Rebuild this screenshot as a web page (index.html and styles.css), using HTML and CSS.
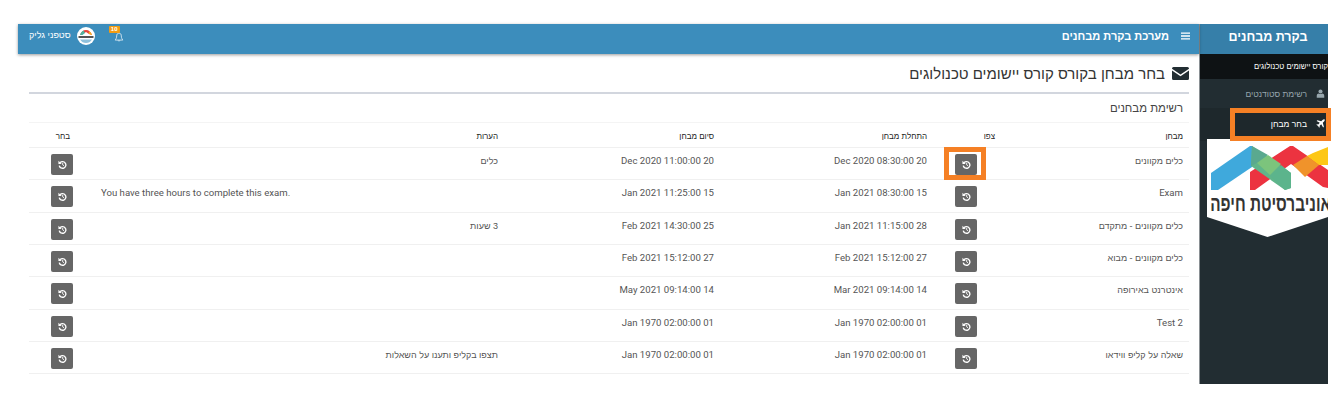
FILE: index.html
```html
<!DOCTYPE html>
<html lang="he" dir="rtl">
<head>
<meta charset="utf-8">
<title>בקרת מבחנים</title>
<link rel="stylesheet" href="styles.css">
</head>
<body>
<div class="app">
  <aside class="sidebar">
    <div class="brand">בקרת מבחנים</div>
    <div class="course">קורס יישומים טכנולוגים</div>
    <nav class="menu">
      <a class="menu-item">
        <svg class="menu-icon" viewBox="0 0 12 12"><circle cx="6" cy="3.2" r="2.7" fill="currentColor"/><path d="M1 11.500V9c0-2 1.500-3 2.800-3 .7.500 1.400.8 2.200.8s1.500-.3 2.200-.8C9.500 6 11 7 11 9v2.500z" fill="currentColor"/></svg>
        <span>רשימת סטודנטים</span>
      </a>
      <a class="menu-item active">
        <svg class="menu-icon" viewBox="0 0 12 12"><path d="M11.500.5c-.8-.5-2 0-2.800.8L7 3 1.800 1.500.8 2.500 5 5 3 7.200 1.300 7 .5 7.800l2.300 1.400L4.200 11.500l.8-.8-.2-1.700L7 7l2.500 4.200 1-1L9 5l1.700-1.700c.8-.8 1.300-2 .8-2.800z" fill="currentColor"/></svg>
        <span>בחר מבחן</span>
      </a>
    </nav>
    <div class="logo">
      <svg class="logo-mark" viewBox="0 0 121 44">
        <path d="M4 27 43 0h2v21L11 44H4z" fill="#3fa9dc"/>
        <path d="M43 26 83 0h3l35 24v18l-5-1L84 18 48 44h-5z" fill="#ec3340"/>
        <path d="M45 0l39 27v15l-6 2L44 20z" fill="#60b58a"/>
        <path d="M45 0l16 9-11 8-6 3z" fill="#5aa98f"/>
        <path d="M50 17l11-8 13 9-11 11z" fill="#7cc47c"/>
        <path d="M74 19l10 8v15l-6 2-15-14z" fill="#5cb48c"/>
        <path d="M86 19l14-9 12 9-14 12z" fill="#f0932b"/>
        <path d="M100 10l6-3 15-6v18h-9z" fill="#fdc715"/>
      </svg>
      <div class="logo-text">אוניברסיטת חיפה</div>
    </div>
  </aside>

  <div class="main">
    <header class="topbar">
      <div class="topbar-title">
        <svg class="hamburger" viewBox="0 0 10 8"><path d="M0 0h10v1.400H0zM0 3.300h10v1.400H0zM0 6.600h10V8H0z" fill="currentColor"/></svg>
        <span>מערכת בקרת מבחנים</span>
      </div>
      <div class="topbar-tools">
        <div class="bell">
          <svg viewBox="0 0 12 13" class="bell-icon"><path d="M6 1.500c-2 0-3 1.500-3 3.500 0 3-1 4-2 5.500h10c-1-1.500-2-2.500-2-5.500 0-2-1-3.500-3-3.500zM4.800 11a1.300 1.300 0 0 0 2.400 0" fill="none" stroke="currentColor" stroke-width=".9"/></svg>
          <span class="badge">10</span>
        </div>
        <svg class="avatar" viewBox="0 0 18 18"><circle cx="9" cy="9" r="9" fill="#fff"/><path d="M3 8c1-3 3-5 6-5s5 2 6 5l-3-1-3-2-3 2z" fill="#e8453c"/><path d="M3 8c.5-2 2-4 3.500-4.500L8 6 5.500 8z" fill="#4fb3a0"/><path d="M12.500 4.500c1.200.8 2 2 2.500 3.500l-2-.5-1.500-1.500z" fill="#f5b21a"/><rect x="1.500" y="9" width="15" height="2" fill="#555"/><path d="M3 12.500h12c-1.500 2.500-3.500 3.500-6 3.500s-4.500-1-6-3.500z" fill="#8fc1dc"/></svg>
        <span class="user-name">סטפני גליק</span>
      </div>
    </header>

    <section class="content">
      <h1 class="page-title">
        <svg class="envelope" viewBox="0 0 17 13"><path d="M1.500 0h14A1.500 1.500 0 0 1 17 1.500v.3L8.500 7.500 0 1.800v-.3A1.500 1.500 0 0 1 1.500 0z" fill="#222d32"/><path d="M0 3.500l8.500 5.700L17 3.500v8A1.500 1.500 0 0 1 15.500 13h-14A1.500 1.500 0 0 1 0 11.500z" fill="#222d32"/></svg>
        <span>בחר מבחן בקורס קורס יישומים טכנולוגים</span>
      </h1>
      <div class="box">
        <h2 class="box-title">רשימת מבחנים</h2>
        <table class="exams">
          <colgroup>
            <col class="c-name"><col class="c-view"><col class="c-start"><col class="c-end"><col class="c-note"><col class="c-pick">
          </colgroup>
          <thead>
            <tr><th>מבחן</th><th>צפו</th><th>התחלת מבחן</th><th>סיום מבחן</th><th>הערות</th><th>בחר</th></tr>
          </thead>
          <tbody id="rows"></tbody>
        </table>
      </div>
      <div class="marker marker-btn"></div>
    </section>
  </div>
  <div class="marker marker-menu"></div>
</div>
<template id="btn"><span class="hist"><svg viewBox="0 0 10 10"><path d="M2.300 3A3.700 3.700 0 1 1 1.400 6.200" fill="none" stroke="#fff" stroke-width="1.500"/><path d="M.5.8v3.600h3.600z" fill="#fff"/><path d="M5.200 3.200v2.200l1.500 1" fill="none" stroke="#fff" stroke-width="1"/></svg></span></template>
<script src="app.js"></script>
</body>
</html>
```

FILE: app.js
```js
var data = [
  ["כלים מקוונים", "20 Dec 2020 08:30:00", "20 Dec 2020 11:00:00", "כלים"],
  ["Exam", "15 Jan 2021 08:30:00", "15 Jan 2021 11:25:00", "You have three hours to complete this exam."],
  ["כלים מקוונים - מתקדם", "28 Jan 2021 11:15:00", "25 Feb 2021 14:30:00", "3 שעות"],
  ["כלים מקוונים - מבוא", "27 Feb 2021 15:12:00", "27 Feb 2021 15:12:00", ""],
  ["אינטרנט באירופה", "14 Mar 2021 09:14:00", "14 May 2021 09:14:00", ""],
  ["Test 2", "01 Jan 1970 02:00:00", "01 Jan 1970 02:00:00", ""],
  ["שאלה על קליפ ווידאו", "01 Jan 1970 02:00:00", "01 Jan 1970 02:00:00", "תצפו בקליפ ותענו על השאלות"]
];
var btn = document.getElementById("btn").innerHTML;
function cell(text) {
  if (/[\u0590-\u05FF]/.test(text)) return "<td class='he'>" + text + "</td>";
  if (/^[A-Za-z]{3,} [a-z]/.test(text)) return "<td class='note-ltr' dir='ltr'>" + text + "</td>";
  return "<td>" + text + "</td>";
}
document.getElementById("rows").innerHTML = data.map(function (r) {
  return "<tr>" + cell(r[0]) + "<td class='cell-view'>" + btn + "</td>" + cell(r[1]) + cell(r[2]) + cell(r[3]) +
    "<td class='cell-pick'>" + btn + "</td></tr>";
}).join("");
```

FILE: styles.css
```css
* { box-sizing: border-box; }
html, body { margin: 0; padding: 0; background: #fff; }
body {
  font-family: Roboto, "Liberation Sans", sans-serif;
  color: #555;
  height: 406px;
  overflow: hidden;
  padding: 24px 16px 0 18px;
}
.app {
  position: relative;
  display: flex;
  width: 1310px;
  height: 360px;
}

/* sidebar */
.sidebar {
  flex: 0 0 129px;
  background: #222d32;
  border-left: 1px solid #8a9094;
  display: flex;
  flex-direction: column;
}
.brand {
  height: 30px;
  background: #367fa9;
  color: #fff;
  font-family: "Liberation Sans", sans-serif;
  font-weight: 700;
  font-size: 12.500px;
  line-height: 26px;
  text-align: center;
  padding-left: 8px;
}
.course {
  height: 25px;
  background: #0e1214;
  color: #fff;
  font-family: "Liberation Sans", sans-serif;
  font-size: 7.700px;
  line-height: 25px;
  white-space: nowrap;
  overflow: hidden;
}
.menu { display: flex; flex-direction: column; }
.menu-item {
  display: flex;
  align-items: center;
  height: 29px;
  padding-right: 3px;
  gap: 9px;
  color: #97a6ad;
  font-family: "Liberation Sans", sans-serif;
  font-size: 8.500px;
}
.menu-item.active {
  height: 33px;
  padding-bottom: 2px;
  color: #fff;
  background: #1e282c;
}
.menu-icon { width: 9px; height: 9px; }
.logo {
  margin-top: -2px;
  width: 121px;
  height: 98px;
  align-self: flex-start;
  background: #fff;
  overflow: hidden;
  clip-path: polygon(0 0, 100% 0, 100% 79.500%, 50% 100%, 0 79.500%);
}
.logo-mark { display: block; width: 121px; height: 44px; margin-top: 7px; }
.logo-text {
  margin-top: 1px;
  color: #333;
  font-family: "Liberation Sans", sans-serif;
  font-weight: 700;
  font-size: 21px;
  line-height: 26px;
  white-space: nowrap;
  text-align: right;
  transform: translateX(3px) scaleX(.73);
  transform-origin: right center;
}

/* main */
.main { flex: 1; display: flex; flex-direction: column; min-width: 0; }
.topbar {
  height: 30px;
  flex: none;
  background: #3c8dbc;
  color: #fff;
  display: flex;
  justify-content: space-between;
  box-shadow: 0 1px 3px rgba(0, 0, 0, .4);
  position: relative;
  padding-left: 11px;
}
.topbar-title {
  display: flex;
  align-items: center;
  gap: 12px;
  padding-right: 9px;
  padding-bottom: 6px;
  font-family: "Liberation Sans", sans-serif;
  font-weight: 700;
  font-size: 11px;
}
.hamburger { width: 9px; height: 8px; }
.topbar-tools {
  display: flex;
  align-items: flex-start;
  font-family: "Liberation Sans", sans-serif;
  font-size: 9px;
}
.bell { position: relative; width: 10px; height: 10px; margin-left: 19px; margin-top: 8px; }
.bell-icon { width: 10px; height: 10px; display: block; }
.badge {
  position: absolute;
  top: -6px;
  left: -5px;
  width: 11px;
  height: 7px;
  background: #f39c12;
  color: #fff;
  border-radius: 1px;
  font-size: 6px;
  font-weight: 700;
  line-height: 7px;
  text-align: center;
}
.avatar { width: 18px; height: 18px; margin: 3px 0 0 6px; }
.user-name { line-height: 23px; }

.content { flex: 1; position: relative; padding: 0 10px 0 11px; }
.page-title {
  display: flex;
  align-items: center;
  gap: 7px;
  height: 40px;
  margin: 0;
  padding-top: 1px;
  border-bottom: 2px solid #d2d6de;
  font-family: "Liberation Sans", sans-serif;
  font-weight: 400;
  font-size: 15px;
  color: #333;
}
.envelope { width: 17px; height: 13px; flex: none; }
.box-title {
  margin: 0;
  height: 28px;
  padding: 6px 6px 0 0;
  font-family: "Liberation Sans", sans-serif;
  font-weight: 400;
  font-size: 11.400px;
  line-height: 16px;
  color: #444;
}
.exams {
  width: 1160px;
  table-layout: fixed;
  border-collapse: collapse;
  font-size: 9.600px;
}
.c-name { width: 188px; }
.c-view { width: 68px; }
.c-start { width: 213px; }
.c-end { width: 216px; }
.c-note { width: 428px; }
.c-pick { width: 47px; }
.exams th {
  height: 25px;
  padding: 2px 6px 0;
  border-top: 1px solid #f4f4f4;
  border-bottom: 1px solid #f0f0f0;
  font-family: "Liberation Sans", sans-serif;
  font-size: 8px;
  font-weight: 400;
  color: #222;
  text-align: right;
}
.exams td {
  height: 32.330px;
  padding: 6px 6px 0;
  border-bottom: 1px solid #f0f0f0;
  vertical-align: top;
  line-height: 14px;
  color: #555;
  white-space: nowrap;
}
.exams td.he { font-family: "Liberation Sans", sans-serif; font-size: 9px; }
.exams td.note-ltr { text-align: left; padding-left: 25px; }
.exams td.cell-view { padding: 6px 2px 0 0; }
.exams td.cell-pick { padding: 6px 3px 0 0; }
.hist {
  display: flex;
  align-items: center;
  justify-content: center;
  width: 22px;
  height: 21px;
  background: #666;
  border-radius: 2px;
}
.cell-view .hist { margin: 0 auto; }
.hist svg { width: 9px; height: 9px; }

/* orange call-outs drawn over the screenshot */
.marker {
  position: absolute;
  border: 5px solid #f58025;
  pointer-events: none;
}
.marker-btn { top: 93px; left: 926px; width: 42px; height: 33px; }
.marker-menu { top: 84px; left: 1212px; width: 101px; height: 33px; }
```
